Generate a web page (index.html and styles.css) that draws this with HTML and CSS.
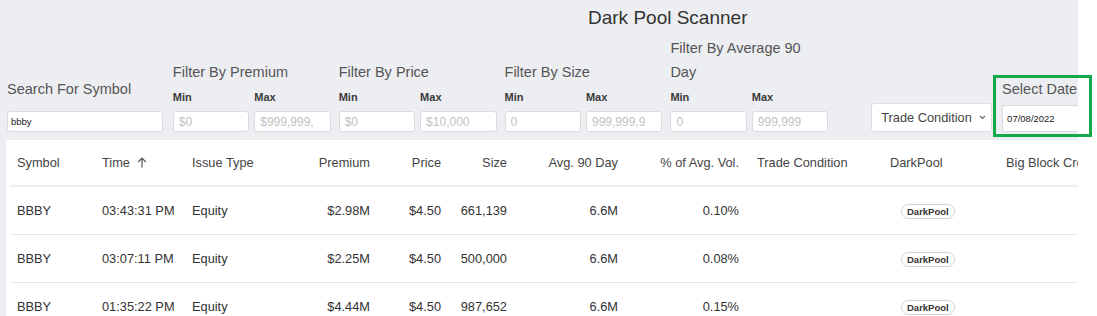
FILE: index.html
```html
<!DOCTYPE html>
<html lang="en">
<head>
    <meta charset="UTF-8">
    <meta name="viewport" content="width=device-width, initial-scale=1.0">
    <title>Dark Pool Scanner</title>
    <link rel="stylesheet" href="styles.css">
</head>
<body>
    <div class="page">
        <div class="top">
            <h1 class="title">Dark Pool Scanner</h1>

            <div class="filters">
                <div class="search">
                    <div class="field-label">Search For Symbol</div>
                    <input class="box search-box" type="text" value="bbby">
                </div>

                <div class="range">
                    <div class="field-label">Filter By Premium</div>
                    <div class="pair">
                        <div class="sub"><span class="sub-label">Min</span><input class="box" placeholder="$0"></div>
                        <div class="sub"><span class="sub-label">Max</span><input class="box" placeholder="$999,999,999"></div>
                    </div>
                </div>

                <div class="range">
                    <div class="field-label">Filter By Price</div>
                    <div class="pair">
                        <div class="sub"><span class="sub-label">Min</span><input class="box" placeholder="$0"></div>
                        <div class="sub"><span class="sub-label">Max</span><input class="box" placeholder="$10,000"></div>
                    </div>
                </div>

                <div class="range">
                    <div class="field-label">Filter By Size</div>
                    <div class="pair">
                        <div class="sub"><span class="sub-label">Min</span><input class="box" placeholder="0"></div>
                        <div class="sub"><span class="sub-label">Max</span><input class="box" placeholder="999,999,999"></div>
                    </div>
                </div>

                <div class="range">
                    <div class="field-label">Filter By Average 90 Day</div>
                    <div class="pair">
                        <div class="sub"><span class="sub-label">Min</span><input class="box" placeholder="0"></div>
                        <div class="sub"><span class="sub-label">Max</span><input class="box" placeholder="999,999"></div>
                    </div>
                </div>

                <button class="condition-btn">
                    Trade Condition
                    <svg width="7" height="5" viewBox="0 0 7 5"><polyline points="1,1 3.5,3.5 6,1" fill="none" stroke="#666" stroke-width="1.1"/></svg>
                </button>

                <div class="date-field">
                    <div class="field-label">Select Date</div>
                    <input class="box date-box" type="text" value="07/08/2022">
                    <div class="highlight"></div>
                </div>
            </div>
        </div>

        <div class="grid">
            <table>
                <colgroup>
                    <col style="width:85px"><col style="width:90px"><col style="width:100px">
                    <col style="width:92px"><col style="width:71px"><col style="width:66px">
                    <col style="width:111px"><col style="width:121px"><col style="width:137px">
                    <col style="width:116px"><col style="width:130px">
                </colgroup>
                <thead>
                    <tr>
                        <th>Symbol</th>
                        <th>Time
                            <svg class="sort" width="10" height="11" viewBox="0 0 10 11"><path d="M5 10.5V1.2M1.2 5L5 1.2 8.8 5" fill="none" stroke="#555" stroke-width="1.2"/></svg>
                        </th>
                        <th>Issue Type</th>
                        <th class="num">Premium</th>
                        <th class="num">Price</th>
                        <th class="num">Size</th>
                        <th class="num">Avg. 90 Day</th>
                        <th class="num">% of Avg. Vol.</th>
                        <th class="cond">Trade Condition</th>
                        <th>DarkPool</th>
                        <th>Big Block Cross</th>
                    </tr>
                </thead>
                <tbody>
                    <tr>
                        <td>BBBY</td><td>03:43:31 PM</td><td>Equity</td>
                        <td class="num">$2.98M</td><td class="num">$4.50</td><td class="num">661,139</td>
                        <td class="num">6.6M</td><td class="num">0.10%</td><td class="cond"></td>
                        <td><span class="badge">DarkPool</span></td><td></td>
                    </tr>
                    <tr>
                        <td>BBBY</td><td>03:07:11 PM</td><td>Equity</td>
                        <td class="num">$2.25M</td><td class="num">$4.50</td><td class="num">500,000</td>
                        <td class="num">6.6M</td><td class="num">0.08%</td><td class="cond"></td>
                        <td><span class="badge">DarkPool</span></td><td></td>
                    </tr>
                    <tr>
                        <td>BBBY</td><td>01:35:22 PM</td><td>Equity</td>
                        <td class="num">$4.44M</td><td class="num">$4.50</td><td class="num">987,652</td>
                        <td class="num">6.6M</td><td class="num">0.15%</td><td class="cond"></td>
                        <td><span class="badge">DarkPool</span></td><td></td>
                    </tr>
                </tbody>
            </table>
        </div>
    </div>
</body>
</html>
```

FILE: styles.css
```css
body {
    margin: 0;
    font-family: "Liberation Sans", Arial, sans-serif;
    background-color: #ffffff;
    color: #333;
}

.page {
    width: 1078px;
    min-height: 100vh;
    background-color: #eceef1;
}

.top {
    padding-bottom: 8px;
}

.title {
    margin: 0;
    padding-left: 588px;
    font-size: 19px;
    font-weight: normal;
    line-height: 36px;
    color: #333;
}

.filters {
    display: flex;
    align-items: flex-end;
    padding-left: 7px;
}

.field-label {
    font-size: 14.5px;
    line-height: 24px;
    color: #555;
    max-width: 150px;
}

.search {
    width: 156px;
    margin-right: 10px;
}

.search .field-label {
    margin-bottom: 10px;
}

.box {
    display: block;
    box-sizing: border-box;
    width: 100%;
    height: 21px;
    margin: 0;
    padding: 0 16px 0 5px;
    border: 1px solid #d9dbde;
    border-radius: 3px;
    background-color: #fff;
    font-family: "Liberation Sans", Arial, sans-serif;
    font-size: 12px;
    color: #222;
    outline: none;
}

.box::placeholder {
    color: #c2c2c2;
}

.search-box {
    font-size: 9.5px;
    padding-left: 3px;
}

.range {
    width: 158px;
    margin-right: 8px;
}

.pair {
    display: flex;
    gap: 5px;
    margin-top: 5px;
}

.sub {
    flex: 1;
    display: flex;
    flex-direction: column;
    min-width: 0;
}

.sub-label {
    font-size: 11px;
    font-weight: bold;
    line-height: 16px;
    color: #3a3a3a;
    margin-bottom: 6px;
}

.condition-btn {
    display: flex;
    align-items: center;
    gap: 7px;
    height: 29px;
    width: 121px;
    margin-left: 35px;
    padding: 0 0 0 9px;
    background-color: #fff;
    border: 1px solid #dcdee1;
    border-radius: 3px;
    font-family: "Liberation Sans", Arial, sans-serif;
    font-size: 12.8px;
    color: #444;
    cursor: pointer;
}

.date-field {
    position: relative;
    width: 76px;
    margin-left: 10px;
}

.date-field .field-label {
    white-space: nowrap;
    margin-bottom: 4px;
}

.date-box {
    height: 27px;
    font-size: 9.5px;
    padding-left: 4px;
    border-right: none;
    border-radius: 3px 0 0 3px;
}

/* recuadro verde de la captura */
.highlight {
    position: absolute;
    left: -9px;
    top: -2px;
    width: 99px;
    height: 62px;
    box-sizing: border-box;
    border: 3px solid #12a94a;
    pointer-events: none;
}

.grid {
    margin-left: 6px;
    background-color: #fff;
    overflow: hidden;
    min-height: 176px;
}

table {
    margin-left: 4px;
    border-collapse: collapse;
    table-layout: fixed;
    width: 1119px;
    font-size: 12.8px;
}

th,
td {
    padding: 0 7px;
    text-align: left;
    white-space: nowrap;
    overflow: hidden;
}

th {
    height: 45px;
    font-weight: normal;
    color: #444;
    border-bottom: 2px solid #eceef1;
}

td {
    height: 47px;
    color: #333;
    border-bottom: 1px solid #e6e7ea;
}

.num {
    text-align: right;
}

.cond {
    padding-left: 11px;
}

.sort {
    margin-left: 3px;
    vertical-align: -1px;
}

.badge {
    display: inline-block;
    margin-left: 11px;
    padding: 1px 5px;
    border: 1px solid #cfd1d4;
    border-radius: 8px;
    font-size: 9.5px;
    font-weight: bold;
    line-height: 11px;
    color: #333;
}
```
